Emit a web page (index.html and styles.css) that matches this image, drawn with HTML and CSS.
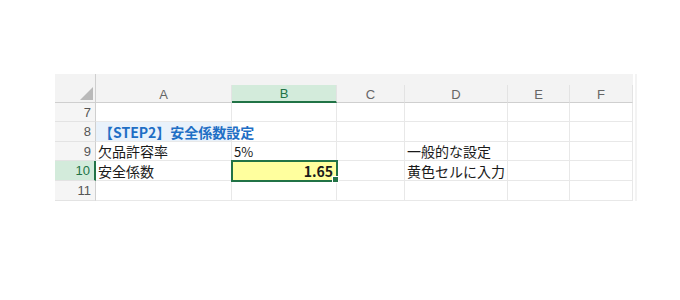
FILE: index.html
```html
<!DOCTYPE html>
<html lang="ja">
<head>
<meta charset="utf-8">
<link rel="stylesheet" href="styles.css">
</head>
<body>
<div class="sheet">
  <div class="corner"><svg class="tri" width="13" height="13" viewBox="0 0 13 13"><polygon points="13,0 13,13 0,13" fill="#b9b9b9"/></svg></div>
  <div class="strip"></div>
  <div class="ch">A</div>
  <div class="ch sel">B</div>
  <div class="ch">C</div>
  <div class="ch">D</div>
  <div class="ch">E</div>
  <div class="ch">F</div>

  <div class="rh">7</div>
  <div class="c"></div><div class="c"></div><div class="c"></div><div class="c"></div><div class="c"></div><div class="c"></div>

  <div class="rh">8</div>
  <div class="c title"><span class="title-text">【STEP2】安全係数設定</span></div><div class="c"></div><div class="c"></div><div class="c"></div><div class="c"></div><div class="c"></div>

  <div class="rh">9</div>
  <div class="c">欠品許容率</div><div class="c num">5%</div><div class="c"></div><div class="c">一般的な設定</div><div class="c"></div><div class="c"></div>

  <div class="rh rsel">10</div>
  <div class="c">安全係数</div><div class="c active"><span>1.65</span><i class="handle"></i></div><div class="c"></div><div class="c">黄色セルに入力</div><div class="c"></div><div class="c"></div>

  <div class="rh">11</div>
  <div class="c"></div><div class="c"></div><div class="c"></div><div class="c"></div><div class="c"></div><div class="c"></div>
</div>
</body>
</html>
```
FILE: styles.css
```css
html, body {
  margin: 0;
  padding: 0;
  background: #ffffff;
}
body {
  font-family: "Noto Sans CJK JP", "Noto Sans", sans-serif;
}
.sheet {
  display: grid;
  grid-template-columns: 41px 136px 105px 68px 103px 62px 63px;
  grid-template-rows: 11px 18px 19px 20px 19px 20px 20px;
  width: 580px;
  margin: 74px 0 0 55px;
  border-right: 2px solid #f3f3f3;
  box-sizing: content-box;
}
.corner {
  grid-row: 1 / 3;
  grid-column: 1;
  background: #f3f3f3;
  border-right: 1px solid #cfcfcf;
  border-bottom: 1px solid #cfcfcf;
  display: flex;
  align-items: flex-end;
  justify-content: flex-end;
  padding: 0 2px 2px 0;
}
.tri { display: block; }
.strip {
  grid-row: 1;
  grid-column: 2 / -1;
  background: #f3f3f3;
}
.ch {
  background: #f3f3f3;
  border-right: 1px solid #e3e3e3;
  border-bottom: 1px solid #cfcfcf;
  font-family: "Liberation Sans", Arial, sans-serif;
  font-size: 13px;
  color: #666;
  display: flex;
  align-items: center;
  justify-content: center;
  padding-top: 1px;
}
.ch.sel {
  background: #d3ebdb;
  border-bottom: 2px solid #217346;
  color: #217346;
}
.rh {
  background: #f5f5f5;
  border-right: 1px solid #cfcfcf;
  border-bottom: 1px solid #e3e3e3;
  font-family: "Liberation Sans", Arial, sans-serif;
  font-size: 13px;
  color: #555;
  display: flex;
  align-items: center;
  justify-content: flex-end;
  padding-right: 4px;
}
.rh.rsel {
  background: #d3ebdb;
  border-right: 2px solid #217346;
  color: #217346;
}
.c {
  border-right: 1px solid #e8e8e8;
  border-bottom: 1px solid #e8e8e8;
  font-size: 14px;
  color: #1a1a1a;
  display: flex;
  align-items: center;
  padding-left: 2px;
  white-space: nowrap;
  min-width: 0;
  position: relative;
}
.num { font-size: 13px; }
.title {
  background: #e9f2fb;
  overflow: visible;
}
.title-text {
  position: relative;
  z-index: 2;
  font-weight: bold;
  color: #1f6fc5;
  padding-left: 1px;
}
.active {
  background: #ffff9e;
  outline: 2px solid #217346;
  outline-offset: -1px;
  justify-content: flex-end;
  padding-right: 3px;
  font-weight: bold;
  z-index: 1;
}
.handle {
  position: absolute;
  right: -3px;
  bottom: -3px;
  width: 5px;
  height: 5px;
  background: #217346;
  border: 1px solid #fff;
}
```
